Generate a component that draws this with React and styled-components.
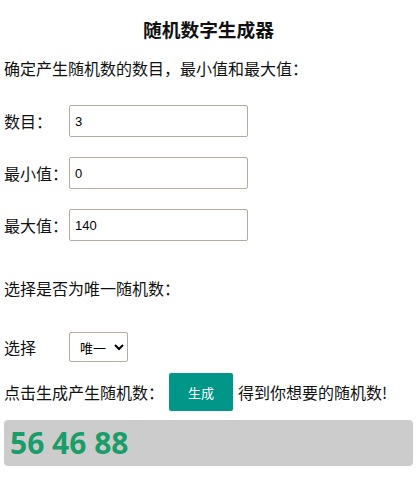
import React, { useState } from "react";
import styled, { createGlobalStyle } from "styled-components";

const GlobalStyle = createGlobalStyle`
  body {
    margin: 0;
    padding: 0 4px;
    background: #fff;
    color: #111;
    font-family: "Microsoft YaHei", "Noto Sans CJK SC", sans-serif;
    font-size: 16px;
  }
`;

function App() {
  const [count, setCount] = useState("3");
  const [min, setMin] = useState("0");
  const [max, setMax] = useState("140");
  const [unique, setUnique] = useState("yes");
  const [result, setResult] = useState([56, 46, 88]);

  const handleGenerate = () => {
    const n = parseInt(count) || 0;
    const lo = parseInt(min) || 0;
    const hi = parseInt(max) || 0;
    const out = [];
    let guard = 0;
    while (out.length < n && guard < 10000) {
      guard++;
      const v = Math.floor(Math.random() * (hi - lo + 1)) + lo;
      if (unique === "yes" && out.includes(v)) continue;
      out.push(v);
    }
    setResult(out);
  };

  return (
    <Wrapper>
      <GlobalStyle />
      <Title>随机数字生成器</Title>
      <Text>确定产生随机数的数目，最小值和最大值：</Text>
      <Row>
        <Label>数目：</Label>
        <Input value={count} onChange={(e) => setCount(e.target.value)} />
      </Row>
      <Row>
        <Label>最小值：</Label>
        <Input value={min} onChange={(e) => setMin(e.target.value)} />
      </Row>
      <Row>
        <Label>最大值：</Label>
        <Input value={max} onChange={(e) => setMax(e.target.value)} />
      </Row>
      <Question>选择是否为唯一随机数：</Question>
      <SelectRow>
        <Label>选择</Label>
        <Select value={unique} onChange={(e) => setUnique(e.target.value)}>
          <option value="yes">唯一</option>
          <option value="no">不唯一</option>
        </Select>
      </SelectRow>
      <ActionRow>
        <span>点击生成产生随机数：</span>
        <Button onClick={handleGenerate}>生成</Button>
        <span>得到你想要的随机数!</span>
      </ActionRow>
      <Result>{result.join(" ")}</Result>
    </Wrapper>
  );
}

const Wrapper = styled.div`
  width: 409px;
  padding-top: 16px;
`;

const Title = styled.h3`
  margin: 0 0 14px;
  text-align: center;
  font-size: 18.72px;
  font-weight: bold;
  line-height: 26px;
`;

const Text = styled.p`
  margin: 0 0 25px;
  line-height: 24px;
`;

const Row = styled.div`
  display: flex;
  align-items: center;
  height: 32px;
  margin-bottom: 20px;
`;

const Label = styled.label`
  width: 65px;
  flex-shrink: 0;
`;

const Input = styled.input`
  box-sizing: border-box;
  width: 179px;
  height: 32px;
  padding: 0 5px;
  border: 1px solid #b9aa9e;
  border-radius: 2px;
  font-family: "Liberation Sans", Arial, sans-serif;
  font-size: 13px;
  color: #000;
  outline: none;
`;

const Question = styled.p`
  margin: 35px 0 0;
  line-height: 24px;
`;

const SelectRow = styled.div`
  display: flex;
  align-items: center;
  height: 30px;
  margin-top: 32px;
`;

const Select = styled.select`
  box-sizing: border-box;
  width: 59px;
  height: 30px;
  padding: 0 4px 0 6px;
  border: 1px solid #b9aa9e;
  border-radius: 2px;
  background: #fff;
  font-family: "Microsoft YaHei", "Noto Sans CJK SC", sans-serif;
  font-size: 13px;
  color: #000;
`;

const ActionRow = styled.div`
  display: flex;
  align-items: center;
  margin-top: 11px;
  white-space: nowrap;
`;

const Button = styled.button`
  width: 64px;
  height: 38px;
  margin: 0 5px;
  border: none;
  border-radius: 2px;
  background: #009688;
  color: #fff;
  font-family: "Microsoft YaHei", "Noto Sans CJK SC", sans-serif;
  font-size: 13px;
  cursor: pointer;
`;

const Result = styled.div`
  box-sizing: border-box;
  height: 46px;
  margin-top: 9px;
  padding: 0 6px;
  background: #cccccc;
  border-radius: 4px;
  color: #1a9d68;
  font-family: "Open Sans", "Noto Sans", sans-serif;
  font-weight: bold;
  font-size: 30px;
  line-height: 46px;
`;

export default App;
